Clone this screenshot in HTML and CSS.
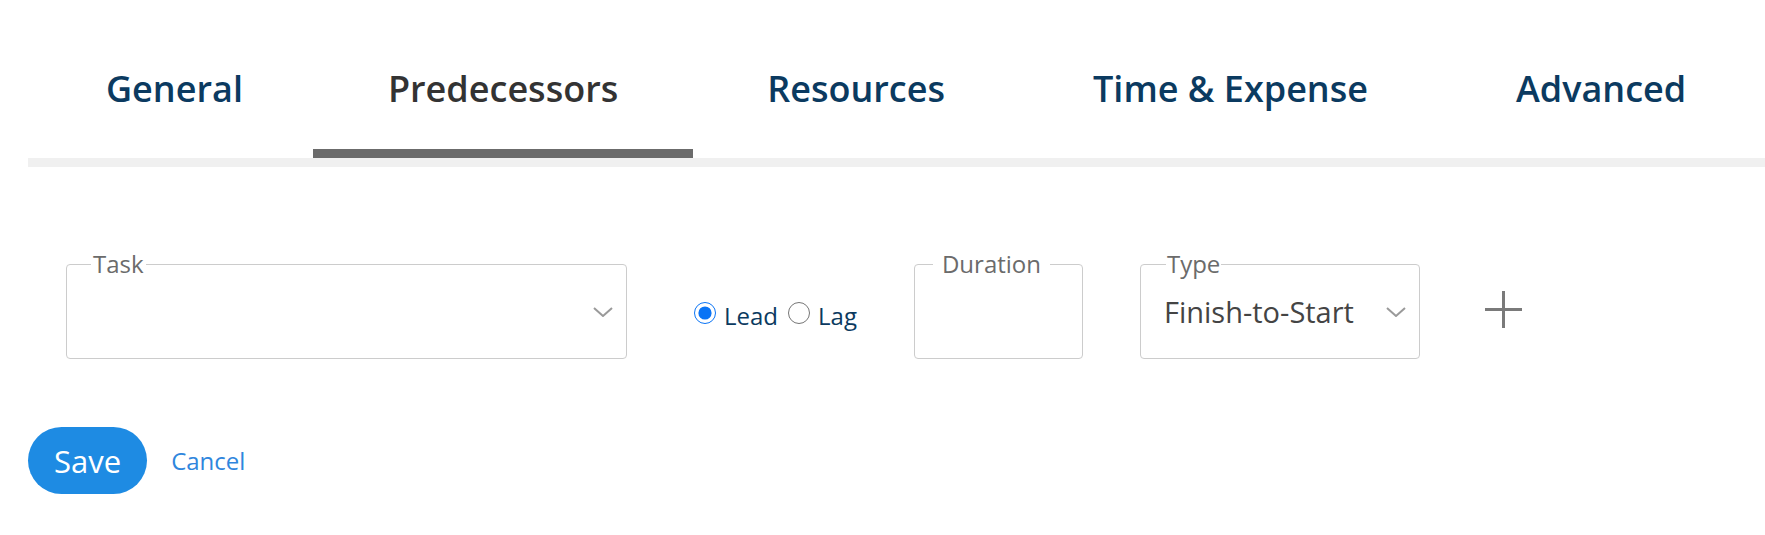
FILE: index.html
```html
<!DOCTYPE html>
<html lang="en">
<head>
    <meta charset="UTF-8">
    <title>Task</title>
    <link rel="stylesheet" href="styles.css">
</head>
<body>
    <div class="tabs">
        <a class="tab" href="#general">General</a>
        <a class="tab active" href="#predecessors">Predecessors</a>
        <a class="tab" href="#resources">Resources</a>
        <a class="tab" href="#time">Time &amp; Expense</a>
        <a class="tab" href="#advanced">Advanced</a>
    </div>

    <div class="row">
        <fieldset class="field task">
            <legend class="label">Task</legend>
            <div class="field-body">
                <span class="value"></span>
                <svg class="chevron" width="20" height="10" viewBox="0 0 20 10"><polyline points="1,1 10,9 19,1" fill="none" stroke="#9a9a9a" stroke-width="2"/></svg>
            </div>
        </fieldset>

        <div class="radios">
            <input class="radio" type="radio" name="offset" id="lead" checked>
            <label class="radio-text" for="lead">Lead</label>
            <input class="radio" type="radio" name="offset" id="lag">
            <label class="radio-text" for="lag">Lag</label>
        </div>

        <fieldset class="field duration">
            <legend class="label">Duration</legend>
            <div class="field-body"></div>
        </fieldset>

        <fieldset class="field type">
            <legend class="label">Type</legend>
            <div class="field-body">
                <span class="value">Finish-to-Start</span>
                <svg class="chevron" width="20" height="10" viewBox="0 0 20 10"><polyline points="1,1 10,9 19,1" fill="none" stroke="#9a9a9a" stroke-width="2"/></svg>
            </div>
        </fieldset>

        <svg class="add" width="37" height="37" viewBox="0 0 37 37">
            <line x1="18.5" y1="0" x2="18.5" y2="37" stroke="#7a7a7a" stroke-width="3"/>
            <line x1="0" y1="18.5" x2="37" y2="18.5" stroke="#7a7a7a" stroke-width="3"/>
        </svg>
    </div>

    <div class="actions">
        <button class="save">Save</button>
        <a class="cancel" href="#">Cancel</a>
    </div>
</body>
</html>
```

FILE: styles.css
```css
body{
    margin:0;
    font-family:"Open Sans", "Liberation Sans", sans-serif;
    background-color:#fff;
}

.tabs{
    display:flex;
    margin-left:28px;
    padding-left:4px;
    padding-top:64px;
    border-bottom:9px solid #f0f0f0;
}

.tab{
    padding:0 74px 35px;
    line-height:50px;
    font-size:36px;
    font-weight:600;
    color:#0b3a60;
    text-decoration:none;
    border-bottom:9px solid transparent;
    white-space:nowrap;
}

.tab:first-child{
    padding-right:70px;
}

.tab.active{
    padding-left:75px;
    padding-right:75px;
    color:#333;
    border-bottom-color:#6b6b6b;
}

.row{
    display:flex;
    align-items:flex-start;
    margin:85px 0 0 66px;
}

.field{
    box-sizing:border-box;
    margin:0;
    padding:0;
    min-width:0;
    border:1px solid #ccc;
    border-radius:4px;
}

.label{
    font-size:24px;
    line-height:24px;
    color:#6b6b6b;
    padding:0 2px;
    margin-left:24px;
}

.field-body{
    box-sizing:border-box;
    height:82px;
    padding:0 13px 11px 23px;
    display:flex;
    align-items:center;
    justify-content:space-between;
}

.task{
    width:561px;
}

.duration{
    width:169px;
    margin-left:57px;
}

.duration .label{
    margin-left:18px;
    padding:0 9px;
}

.type{
    width:280px;
    margin-left:57px;
}

.type .label{
    margin-left:25px;
    padding:0 1px;
}

.value{
    font-size:29px;
    color:#444;
}

.radios{
    display:flex;
    align-items:center;
    margin:47px 0 0 67px;
    font-size:24px;
    color:#0b3a60;
}

.radio{
    width:22px;
    height:22px;
    margin:0 0 6px 0;
    accent-color:#0a74f5;
}

.radio-text{
    margin-left:8px;
    margin-right:10px;
}

.radio-text:last-child{
    margin-right:0;
}

.add{
    margin:39px 0 0 65px;
}

.actions{
    display:flex;
    align-items:center;
    margin:68px 0 0 28px;
}

.save{
    height:67px;
    padding:0 26px;
    border:none;
    border-radius:34px;
    background-color:#1e8be3;
    color:#fff;
    font-family:"Open Sans", "Liberation Sans", sans-serif;
    font-size:31px;
}

.cancel{
    margin-left:24px;
    font-size:24px;
    color:#2f86dd;
    text-decoration:none;
}
```
